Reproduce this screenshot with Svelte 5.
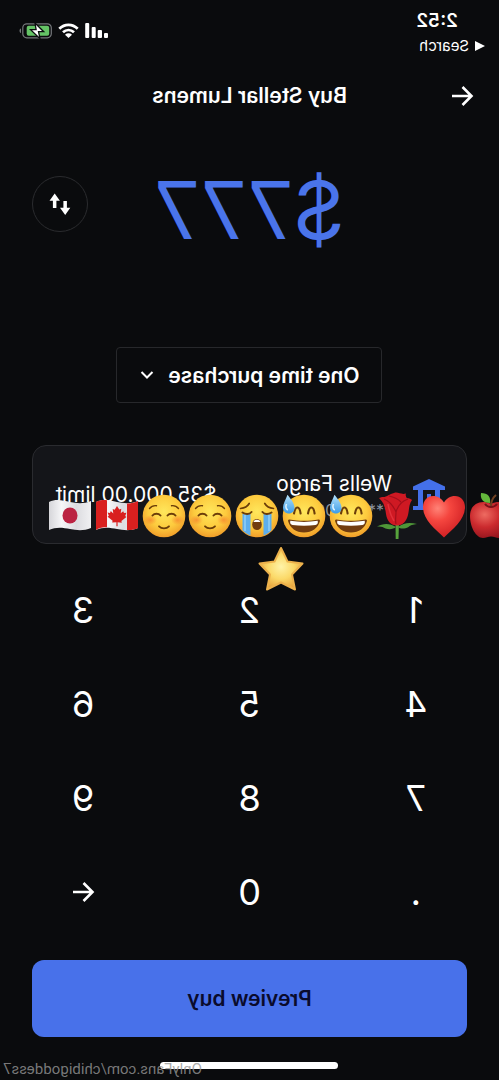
<script>
  let amount = $state('777');
  const keys = ['1', '2', '3', '4', '5', '6', '7', '8', '9', '.', '0'];
  const press = (key) => (amount += key);
  const erase = () => (amount = amount.slice(0, -1));
</script>

{#snippet arrow()}
  <svg width="24" height="24" viewBox="0 0 24 24" fill="none" stroke="#fff" stroke-width="2.6" aria-hidden="true">
    <path d="M22 12H3M11.5 3 2.500 12l9 9" />
  </svg>
{/snippet}

{#snippet blush()}
  <svg viewBox="0 0 44 44" role="img" aria-label="Smiling face">
    <circle cx="22" cy="22" r="21.3" fill="url(#skin)" />
    <ellipse cx="8.5" cy="26" rx="6.5" ry="5" fill="url(#cheek)" />
    <ellipse cx="35.5" cy="26" rx="6.5" ry="5" fill="url(#cheek)" />
    <g fill="none" stroke="#6b3d09" stroke-linecap="round">
      <path d="M7.5 14.5c1.6-2 4.2-3.2 7-2.8M36.5 14.5c-1.6-2-4.2-3.2-7-2.8" stroke-width="1.4" />
      <path d="M10.5 21.5c2-2.5 6-2.5 8 0M25.5 21.5c2-2.5 6-2.5 8 0" stroke-width="2" />
      <path d="M17 32.3c2.6 2.7 7.4 2.7 10 0" stroke-width="1.8" />
    </g>
  </svg>
{/snippet}

{#snippet sweat()}
  <svg viewBox="0 0 44 44" role="img" aria-label="Grinning face with sweat">
    <circle cx="22" cy="22" r="21.3" fill="url(#skin)" />
    <path d="M12 19.5c.8-4.500 2.200-6 3.400-6s2.600 1.500 3.200 6M26 19.500c.8-4.500 2.200-6 3.400-6s2.600 1.500 3.200 6" fill="none" stroke="#6b3d09" stroke-width="2.1" stroke-linecap="round" />
    <path d="M7.5 25.500c9 1.800 20 1.800 29 0 1.300-.2 1.700.6 1.300 2C36 34 30 38.500 22 38.500S8 34 6.200 27.500c-.4-1.400 0-2.200 1.300-2Z" fill="#713c10" />
    <path d="M8.3 26.800c9 1.500 18.400 1.500 27.400 0 .6 2.400-.5 4-2.200 4.300-7.500 1-15.500 1-23 0-1.700-.3-2.800-1.900-2.200-4.300Z" fill="#fff" />
    <path d="M5.5.8C3.500 6 1 10 1 13.500c0 3.600 2.700 6 6 6s5.700-2.500 5.500-6C12.300 9 8 4 5.500.8Z" fill="url(#water)" />
    <path d="M4.5 10c-1.200 3-.4 5 1.300 6" fill="none" stroke="#dff4ff" stroke-width="1.5" />
  </svg>
{/snippet}

<div class="page">
  <main class="screen">
    <header class="status">
      <div class="clock">
        <time>2:52</time>
        <a href="#search">
          <svg width="10" height="10" viewBox="0 0 10 10" aria-hidden="true"><path d="M10 0v10L0 5z" fill="#fff" /></svg>
          Search
        </a>
      </div>
      <div class="signals">
        <svg width="23" height="16" viewBox="0 0 23 16" fill="#fff" aria-hidden="true">
          <rect x="0" y="10" width="4" height="5" rx="1" />
          <rect x="6" y="7" width="4.3" height="8" rx="1" />
          <rect x="12.3" y="4" width="4" height="11" rx="1" />
          <rect x="18.8" y="0" width="4" height="15" rx="1" />
        </svg>
        <svg width="21" height="16" viewBox="0 0 21 16" aria-hidden="true">
          <path d="M1.3 5.700c5.200-5.200 13.200-5.200 18.400 0M5 9.300c3.200-3.100 7.800-3.100 11 0" fill="none" stroke="#fff" stroke-width="2.7" />
          <path d="M10.500 15 7 11.700c2-1.800 5-1.800 7 0Z" fill="#fff" />
        </svg>
        <svg width="33" height="16" viewBox="0 0 33 16" aria-hidden="true">
          <rect x=".7" y=".8" width="28.5" height="14" rx="4" fill="none" stroke="#74777a" stroke-width="1.2" />
          <path d="M31 5.500c2 .5 2 4 0 4.700Z" fill="#74777a" />
          <rect x="2.8" y="2.8" width="22.5" height="10" rx="2" fill="#65c466" />
          <path d="M17 0 8.300 8.700h5.200L12 15.700l9.400-9h-5.500Z" fill="#fff" stroke="#0b0c0e" stroke-width="1.3" />
        </svg>
      </div>
    </header>

    <nav class="topbar">
      <button class="plain" aria-label="Back">{@render arrow()}</button>
      <h1>Buy Stellar Lumens</h1>
    </nav>

    <section class="amount">
      <output>${amount}</output>
      <button class="swap" aria-label="Swap currency">
        <svg width="24" height="24" viewBox="0 0 24 24" fill="#fff" aria-hidden="true">
          <path d="M17.300 1.500 22.500 8.800h-3.400V16h-3.500V8.800h-3.500ZM6.800 23 1.700 15.800h3.400V9h3.500v6.800H12Z" />
        </svg>
      </button>
    </section>

    <div class="frequency">
      <select aria-label="Purchase frequency">
        <option>One time purchase</option>
      </select>
      <svg width="14" height="10" viewBox="0 0 14 10" fill="none" stroke="#fff" stroke-width="2" aria-hidden="true">
        <path d="m1.500 2 5.500 5.500L12.500 2" />
      </svg>
    </div>

    <button class="card">
      <svg width="34" height="34" viewBox="0 0 34 34" fill="#4470ea" aria-hidden="true">
        <path d="M17 1 33 8.500V12H1V8.500ZM6 12h5v16H6ZM15 16h4v12h-4ZM23 12h5v16h-5ZM1 28h32v4H1Z" />
      </svg>
      <span class="bank">
        <span>Wells Fargo</span>
        <small>**** 0000</small>
      </span>
      <span class="limit">$35,000.00 limit</span>
    </button>

    <section class="keypad">
      {#each keys as key}
        <button onclick={() => press(key)}>{key}</button>
      {/each}
      <button aria-label="Delete" onclick={erase}>{@render arrow()}</button>
    </section>

    <button class="preview">Preview buy</button>

    <footer>
      <div class="home"></div>
      <span class="credit">OnlyFans.com/chibigoddess7</span>
    </footer>
  </main>

  <div class="stickers">
    <svg class="defs" aria-hidden="true">
      <defs>
        <radialGradient id="skin" cx=".5" cy=".4" r=".62">
          <stop offset="0" stop-color="#ffe75c" /><stop offset=".6" stop-color="#fdcb3e" /><stop offset="1" stop-color="#f09a28" />
        </radialGradient>
        <radialGradient id="cheek">
          <stop offset="0" stop-color="#f4702a" stop-opacity=".6" /><stop offset="1" stop-color="#f4702a" stop-opacity="0" />
        </radialGradient>
        <linearGradient id="water" x2="0" y2="1">
          <stop offset="0" stop-color="#b5e2fb" /><stop offset="1" stop-color="#3c9ce8" />
        </linearGradient>
        <linearGradient id="cloth">
          <stop offset="0" stop-color="#d6d6da" /><stop offset=".3" stop-color="#f6f6f8" /><stop offset=".65" stop-color="#dcdce0" /><stop offset="1" stop-color="#f0f0f2" />
        </linearGradient>
        <radialGradient id="heart" cx=".35" cy=".3" r=".75">
          <stop offset="0" stop-color="#ff8377" /><stop offset=".4" stop-color="#f5463f" /><stop offset="1" stop-color="#cf1d22" />
        </radialGradient>
        <radialGradient id="fruit" cx=".35" cy=".35" r=".7">
          <stop offset="0" stop-color="#ee6b61" /><stop offset=".5" stop-color="#cb2a2e" /><stop offset="1" stop-color="#92141d" />
        </radialGradient>
        <radialGradient id="gold" cx=".5" cy=".45" r=".6">
          <stop offset="0" stop-color="#fff3a8" /><stop offset=".5" stop-color="#fbd968" /><stop offset="1" stop-color="#e49a35" />
        </radialGradient>
      </defs>
    </svg>
    <div class="row">
      <svg viewBox="0 0 44 44" role="img" aria-label="Flag of Japan">
        <path d="M1 8c7-3.500 14-1.500 21 0s14 2 21-1v27c-7 3-14 2.500-21 1s-14-2.500-21 1Z" fill="url(#cloth)" />
        <ellipse cx="22" cy="21.5" rx="7.5" ry="8" fill="#bb2342" />
      </svg>
      <svg viewBox="0 0 44 44" role="img" aria-label="Flag of Canada">
        <path d="M1 8c7-3.500 14-1.500 21 0s14 2 21-1v27c-7 3-14 2.500-21 1s-14-2.500-21 1Z" fill="url(#cloth)" />
        <path d="M1 8c3.500-1.700 7-2.200 11-1.700v27c-4-.5-7.500 0-11 2.700ZM32 9.400c4 .2 7.500-.8 11-2.400v27c-3.500 1.600-7 2.300-11 2Z" fill="#d9201f" />
        <path d="m22 12 2.300 3.600 2-.8-.6 4.500 2.500-2.100.8 1.900 2.400-.4-1.200 3.300 1.200 1-5 4 .4 1.700-4.200-.4v4h-1.200v-4l-4.200.2.400-1.700-5-4 1.200-1-1.200-3.200 2.400.4.800-1.900 2.500 2.300-.6-4.500 2 .8Z" fill="#d9201f" />
      </svg>
      {@render blush()}
      {@render blush()}
      <svg viewBox="0 0 44 44" role="img" aria-label="Loudly crying face">
        <circle cx="22" cy="22" r="21.3" fill="url(#skin)" />
        <path d="M7.500 20h8v21.500c-3-1-6-3-8-5.500ZM28.500 20h8v16c-2 2.500-5 4.500-8 5.500Z" fill="#5daeed" />
        <path d="M10 20v17M34 20v17" stroke="#91cff8" stroke-width="1.5" />
        <g fill="none" stroke="#6b3d09" stroke-linecap="round">
          <path d="M5.500 14.500c4-.4 7-2 8.700-5M38.500 14.500c-4-.4-7-2-8.700-5" stroke-width="1.7" />
          <path d="M7.500 18.500c3 2 7 2 9-.5M27.500 18c2 2.500 6 2.500 9 .5" stroke-width="2" />
        </g>
        <ellipse cx="22" cy="30.5" rx="4.8" ry="5.5" fill="#713c10" />
        <path d="M18.500 28c1-3 6-3 7 0Z" fill="#fff" />
      </svg>
      {@render sweat()}
      {@render sweat()}
      <svg viewBox="0 0 44 44" role="img" aria-label="Rose">
        <path d="M20.500 27h3.500l-.5 18h-2.800Z" fill="#57a33c" />
        <path d="M21 33C15 29 8 29 2 32.500c4.500-.3 6 .5 8.500 2 4 1.300 8 .7 10.500-1.500ZM23 33c6-5 13-4.500 19-3-4.500.5-6 1-8.500 3-4 2-8 2-10.500 0Z" fill="#4f9638" />
        <path d="M7 3c5 .5 7-3 12-4 4-1.500 7 2 12 .5-.7 2 0 3 .8 4.500 2.500.4 4.200 1 5.200 2-3.500 5-2.500 9-4 15-1.600 6-5 10.500-11 10.500S12 27 11 20C10.200 14.500 9.500 9 4 4Z" fill="#cf1923" />
        <path d="M9 5c5 2 9 6 12 13M33 5c-6 2-10 6-12 13 0 5-1 8 0 12M14 2c5 1 10 4 12 6" fill="none" stroke="#a30f1b" stroke-width="1.2" />
        <path d="M13 10c1 6 3 12 6 17" fill="none" stroke="#e2303a" stroke-width="1.5" />
      </svg>
      <svg viewBox="0 0 44 44" role="img" aria-label="Red heart">
        <path d="M22 43.500C13 35 1 25.500 1 13 1 6.500 5.500 2 11 2c5 0 8.500 2.500 11 6.500C24.500 4.500 28 2 33 2c5.500 0 10 4.500 10 11 0 12.500-12 22-21 30.500Z" fill="url(#heart)" />
      </svg>
      <svg viewBox="0 0 44 44" role="img" aria-label="Red apple">
        <path d="M22 10C12 5 1 10 1 22c0 11 6 22 13 22 3 0 5-1.500 8-1.500s5 1.500 8 1.500c7 0 13-11 13-22C43 10 32 5 22 10Z" fill="url(#fruit)" />
        <path d="M16 10c3 4 9 4 12 0" fill="none" stroke="#771018" stroke-width="2" />
        <path d="M22 12c0-5 1.500-8 5-11" fill="none" stroke="#714122" stroke-width="2" />
        <path d="M21 9C14 9 11 5 12-1c7 0 10 4 9 10Z" fill="#64b83c" />
      </svg>
    </div>
    <svg class="star" viewBox="0 0 46 46" role="img" aria-label="Star">
      <path d="m23 2 6.500 13.500 15 2L34 28.500l3 15-14-7-14 7 3-15L1.500 17.500l15-2Z" fill="url(#gold)" stroke="#edb24c" stroke-width="2" stroke-linejoin="round" />
    </svg>
  </div>
</div>

<style>
  :global(body) {
    margin: 0;
    background: #0a0b0d;
  }

  .page {
    position: relative;
    overflow: hidden;
    font-family: Inter, "Liberation Sans", sans-serif;
    color: #fff;
    background: #0a0b0d;
  }

  .screen {
    display: flex;
    flex-direction: column;
    min-height: 100vh;
    transform: scaleX(-1);
  }

  button,
  select {
    font: inherit;
    color: inherit;
    background: none;
    border: 0;
    padding: 0;
    margin: 0;
    cursor: pointer;
  }

  svg {
    display: block;
    flex: none;
  }

  .status {
    display: flex;
    justify-content: space-between;
    height: 64px;
    box-sizing: border-box;
    padding: 8px 19px 0 14px;
  }

  .clock time {
    display: block;
    padding-left: 27px;
    font-size: 19px;
    line-height: 26px;
    font-weight: 600;
  }

  .clock a {
    display: flex;
    align-items: center;
    gap: 6px;
    font-size: 15px;
    line-height: 24px;
    font-weight: 400;
    color: #fff;
    text-decoration: none;
  }

  .signals {
    display: flex;
    gap: 6px;
    height: 16px;
    padding-top: 15px;
  }

  .topbar {
    display: grid;
    grid-template-columns: 24px 1fr 24px;
    align-items: center;
    height: 64px;
    padding: 0 25px;
  }

  h1 {
    margin: 0;
    text-align: center;
    font-size: 21px;
    line-height: 28px;
    font-weight: 600;
  }

  .amount {
    display: grid;
    grid-template-columns: 56px 1fr 56px;
    align-items: center;
    height: 152px;
    padding: 0 32px;
  }

  .amount output {
    grid-column: 2;
    padding-top: 12px;
    text-align: center;
    font-size: 80px;
    line-height: 104px;
    font-weight: 400;
    color: #4a74ea;
  }

  .swap {
    display: grid;
    place-items: center;
    height: 56px;
    border: 1px solid #2a2b2e;
    border-radius: 50%;
  }

  .frequency {
    display: grid;
    align-self: center;
    align-items: center;
    margin-top: 67px;
  }

  .frequency > * {
    grid-area: 1 / 1;
  }

  .frequency select {
    appearance: none;
    height: 56px;
    padding: 0 50px 0 22px;
    border: 1px solid #27282b;
    border-radius: 4px;
    font-size: 21px;
    font-weight: 600;
  }

  .frequency svg {
    justify-self: end;
    margin-right: 24px;
    pointer-events: none;
  }

  .card {
    display: flex;
    align-items: center;
    gap: 20px;
    height: 99px;
    margin: 42px 32px 0;
    padding: 0 22px 0 20px;
    border: 1px solid #2a2b2f;
    border-radius: 14px;
    background: #141519;
    font-size: 21px;
    line-height: 26px;
    text-align: left;
  }

  .bank {
    display: flex;
    flex-direction: column;
    flex: 1;
    padding-top: 4px;
  }

  .bank small {
    font-size: 16px;
    line-height: 26px;
    color: #8a919e;
  }

  .keypad {
    display: grid;
    grid-template-columns: repeat(3, 1fr);
    grid-auto-rows: 94px;
    margin-top: 19px;
    font-size: 36px;
  }

  .keypad button {
    display: grid;
    place-items: center;
  }

  .preview {
    height: 77px;
    margin: 21px 32px 0;
    border-radius: 12px;
    background: #4871ea;
    color: #0a0b2c;
    font-size: 21px;
    font-weight: 600;
  }

  footer {
    display: flex;
    justify-content: center;
    padding: 25px 0 11px;
  }

  .home {
    width: 178px;
    height: 7px;
    border-radius: 4px;
    background: #fff;
  }

  .credit {
    position: absolute;
    right: 3px;
    bottom: 0;
    font: 15px/22px Roboto, sans-serif;
    color: rgb(150 150 150 / 80%);
  }

  .stickers {
    position: absolute;
    top: 494px;
    left: 47px;
    width: 467px;
  }

  .defs {
    position: absolute;
    width: 0;
    height: 0;
  }

  .row {
    display: grid;
    grid-template-columns: repeat(10, 1fr);
    justify-items: center;
  }

  .row svg {
    width: 44px;
    height: 44px;
    overflow: visible;
  }

  .star {
    width: 46px;
    height: 46px;
    margin: 8px auto 0;
  }
</style>
